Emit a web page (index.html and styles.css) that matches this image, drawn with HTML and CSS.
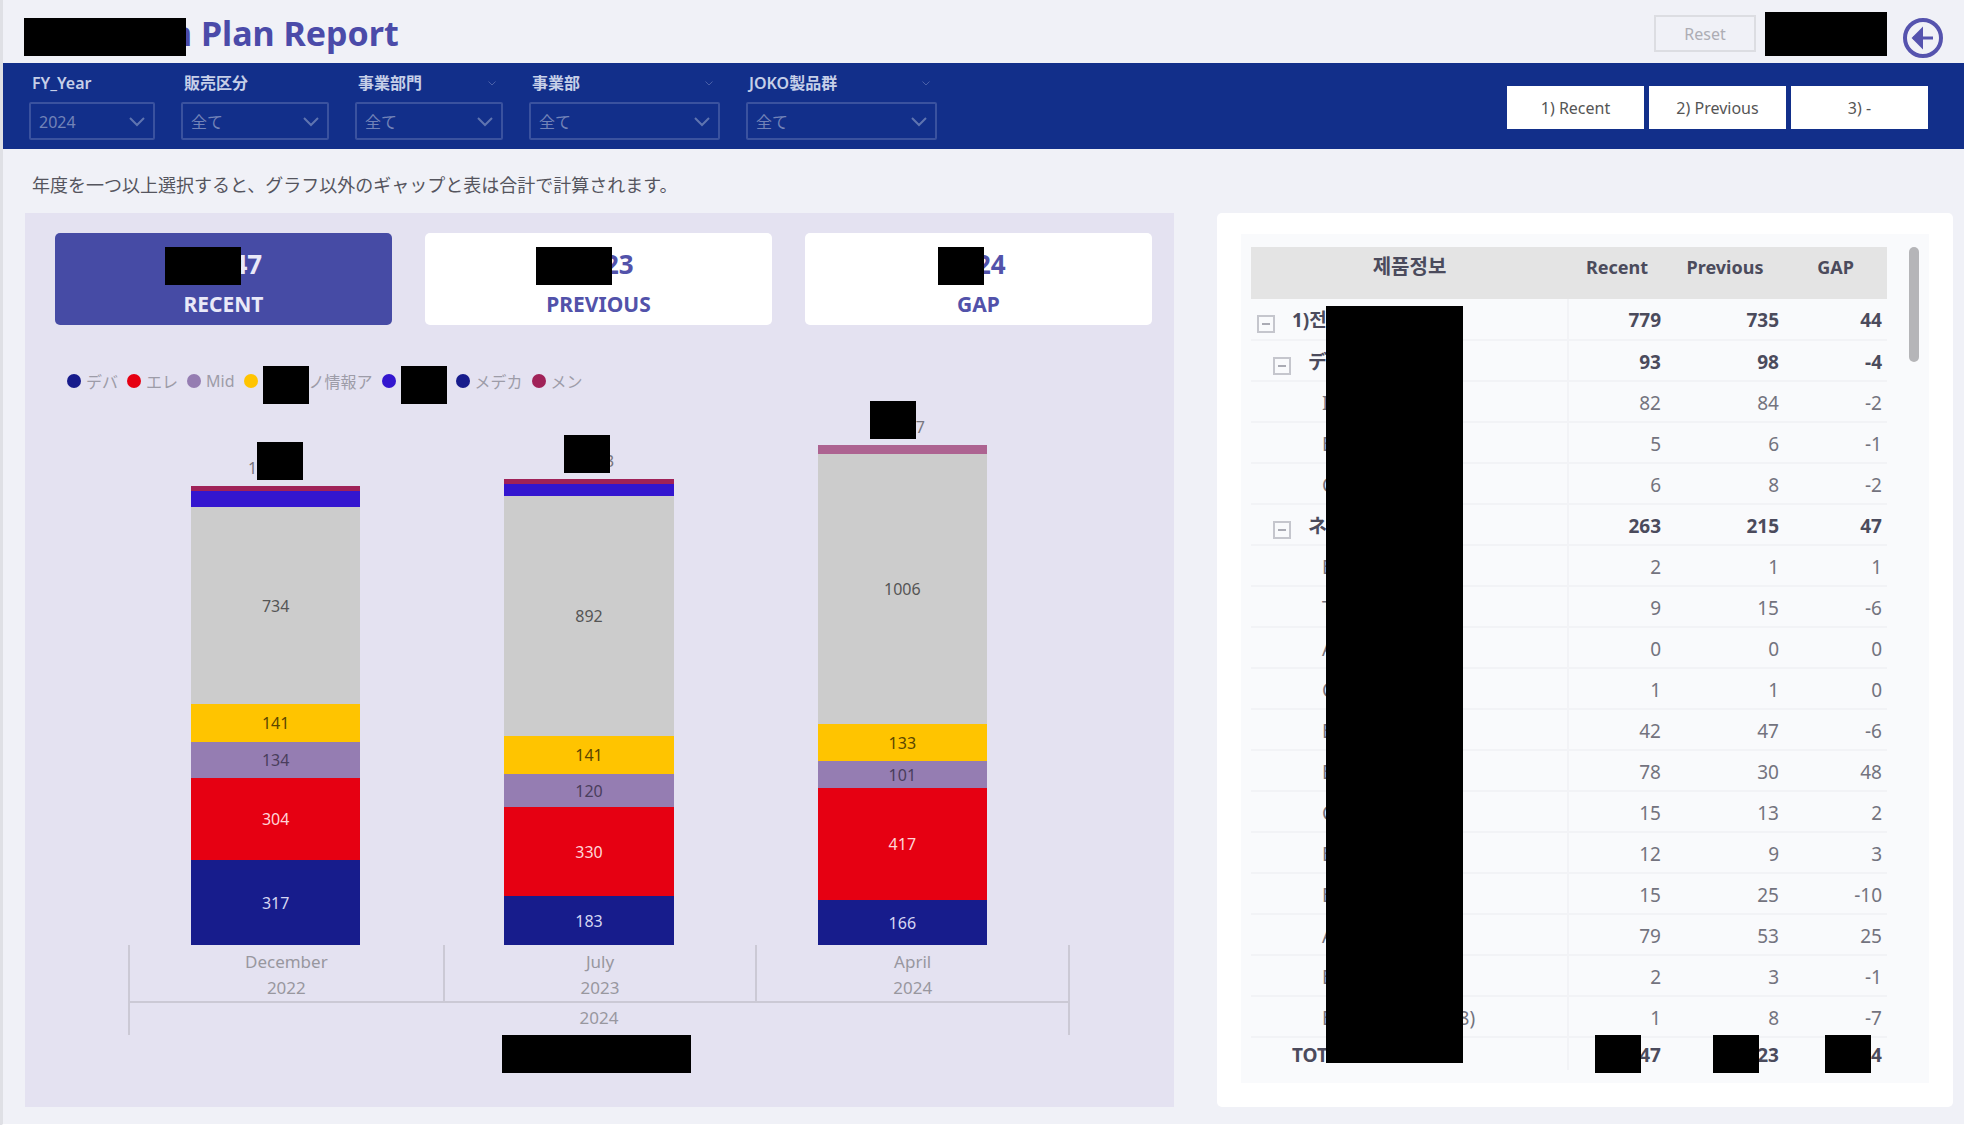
FILE: index.html
```html
<!DOCTYPE html>
<html lang="ja">
<head>
<meta charset="utf-8">
<meta name="viewport" content="width=device-width, initial-scale=1">
<title>Plan Report</title>
<link rel="stylesheet" href="styles.css">
</head>
<body>
<header class="top">
  <h1 class="title"><span class="mask mask-title"></span><span class="title-text">n Plan Report</span></h1>
  <div class="actions">
    <button class="reset" type="button">Reset</button>
    <span class="mask mask-action"></span>
    <button class="back" type="button" aria-label="Back">
      <svg viewBox="0 0 42 42" width="42" height="42" fill="none" stroke="currentColor"><circle cx="21" cy="21" r="18" stroke-width="4"/><path d="M11 21H31" stroke-width="3"/><path d="M20 12L11 21L20 30Z" fill="currentColor" stroke-width="2"/></svg>
    </button>
  </div>
</header>

<section class="band">
  <div class="filters">
    <div class="filter narrow">
      <label for="f1">FY_Year</label>
      <div class="pick"><select id="f1"><option>2024</option></select><svg class="chev" viewBox="0 0 16 10"><path d="M1 1L8 8L15 1"/></svg></div>
    </div>
    <div class="filter medium">
      <label for="f2">販売区分</label>
      <div class="pick"><select id="f2"><option>全て</option></select><svg class="chev" viewBox="0 0 16 10"><path d="M1 1L8 8L15 1"/></svg></div>
    </div>
    <div class="filter medium">
      <div class="filter-head"><label for="f3">事業部門</label><svg class="tiny" viewBox="0 0 16 10"><path d="M1 1L8 8L15 1"/></svg></div>
      <div class="pick"><select id="f3"><option>全て</option></select><svg class="chev" viewBox="0 0 16 10"><path d="M1 1L8 8L15 1"/></svg></div>
    </div>
    <div class="filter wide">
      <div class="filter-head"><label for="f4">事業部</label><svg class="tiny" viewBox="0 0 16 10"><path d="M1 1L8 8L15 1"/></svg></div>
      <div class="pick"><select id="f4"><option>全て</option></select><svg class="chev" viewBox="0 0 16 10"><path d="M1 1L8 8L15 1"/></svg></div>
    </div>
    <div class="filter wide">
      <div class="filter-head"><label for="f5">JOKO製品群</label><svg class="tiny" viewBox="0 0 16 10"><path d="M1 1L8 8L15 1"/></svg></div>
      <div class="pick"><select id="f5"><option>全て</option></select><svg class="chev" viewBox="0 0 16 10"><path d="M1 1L8 8L15 1"/></svg></div>
    </div>
  </div>
  <div class="periods">
    <button type="button">1) Recent</button>
    <button type="button">2) Previous</button>
    <button type="button">3) -</button>
  </div>
</section>

<p class="note">年度を一つ以上選択すると、グラフ以外のギャップと表は合計で計算されます。</p>

<main class="content">
  <section class="chart-panel">
    <div class="cards">
      <button class="card active" type="button"><span class="value value-a"><span class="mask mask-value"></span><span class="digits">47</span></span><span class="name">RECENT</span></button>
      <button class="card" type="button"><span class="value value-b"><span class="mask mask-value"></span><span class="digits">23</span></span><span class="name">PREVIOUS</span></button>
      <button class="card" type="button"><span class="value value-c"><span class="mask mask-small"></span><span class="digits">24</span></span><span class="name">GAP</span></button>
    </div>

    <ul class="legend">
      <li><i class="dot navy"></i>デバ</li>
      <li><i class="dot red"></i>エレ</li>
      <li><i class="dot purple"></i>Mid</li>
      <li><i class="dot yellow"></i><span class="mask mask-small"></span>ノ情報ア</li>
      <li><i class="dot violet"></i><span class="mask mask-small"></span></li>
      <li><i class="dot navy"></i>メデカ</li>
      <li><i class="dot maroon"></i>メン</li>
    </ul>

    <div class="plot">
      <div class="bar">
        <div class="total">1<span class="mask mask-small"></span></div>
        <div class="seg maroon" style="height:5px"></div>
        <div class="seg violet" style="height:16px"></div>
        <div class="seg grey" style="height:197px">734</div>
        <div class="seg yellow" style="height:38px">141</div>
        <div class="seg purple" style="height:36px">134</div>
        <div class="seg red" style="height:82px">304</div>
        <div class="seg navy" style="height:85px">317</div>
      </div>
      <div class="bar">
        <div class="total"><span class="mask mask-small"></span><span class="tail">3</span></div>
        <div class="seg maroon" style="height:5px"></div>
        <div class="seg violet" style="height:12px"></div>
        <div class="seg grey" style="height:240px">892</div>
        <div class="seg yellow" style="height:38px">141</div>
        <div class="seg purple" style="height:33px">120</div>
        <div class="seg red" style="height:89px">330</div>
        <div class="seg navy" style="height:49px">183</div>
      </div>
      <div class="bar">
        <div class="total trailing"><span class="mask mask-small"></span>7</div>
        <div class="seg rose" style="height:9px"></div>
        <div class="seg grey" style="height:270px">1006</div>
        <div class="seg yellow" style="height:37px">133</div>
        <div class="seg purple" style="height:27px">101</div>
        <div class="seg red" style="height:112px">417</div>
        <div class="seg navy" style="height:45px">166</div>
      </div>
    </div>
    <div class="axis">
      <div class="months">
        <div>December<br>2022</div>
        <div>July<br>2023</div>
        <div>April<br>2024</div>
      </div>
      <div class="year">2024</div>
    </div>
    <div class="axis-title"><div class="mask mask-axis"></div></div>
  </section>

  <section class="table-panel">
    <div class="table-area">
      <div class="table-wrap">
        <table>
          <colgroup><col class="c1"><col class="c2"><col class="c3"><col class="c4"></colgroup>
          <thead><tr><th scope="col">제품정보</th><th scope="col">Recent</th><th scope="col">Previous</th><th scope="col">GAP</th></tr></thead>
          <tbody>
            <tr class="strong"><td class="l1"><button class="toggle" type="button" aria-label="Collapse"></button>1)전</td><td>779</td><td>735</td><td>44</td></tr>
            <tr class="strong"><td class="l2"><button class="toggle" type="button" aria-label="Collapse"></button>デ</td><td>93</td><td>98</td><td>-4</td></tr>
            <tr><td class="l3">I</td><td>82</td><td>84</td><td>-2</td></tr>
            <tr><td class="l3">E</td><td>5</td><td>6</td><td>-1</td></tr>
            <tr><td class="l3">C</td><td>6</td><td>8</td><td>-2</td></tr>
            <tr class="strong"><td class="l2"><button class="toggle" type="button" aria-label="Collapse"></button>ネ</td><td>263</td><td>215</td><td>47</td></tr>
            <tr><td class="l3">E</td><td>2</td><td>1</td><td>1</td></tr>
            <tr><td class="l3">T</td><td>9</td><td>15</td><td>-6</td></tr>
            <tr><td class="l3">A</td><td>0</td><td>0</td><td>0</td></tr>
            <tr><td class="l3">C</td><td>1</td><td>1</td><td>0</td></tr>
            <tr><td class="l3">E</td><td>42</td><td>47</td><td>-6</td></tr>
            <tr><td class="l3">E</td><td>78</td><td>30</td><td>48</td></tr>
            <tr><td class="l3">C</td><td>15</td><td>13</td><td>2</td></tr>
            <tr><td class="l3">E</td><td>12</td><td>9</td><td>3</td></tr>
            <tr><td class="l3">E</td><td>15</td><td>25</td><td>-10</td></tr>
            <tr><td class="l3">A</td><td>79</td><td>53</td><td>25</td></tr>
            <tr><td class="l3">E</td><td>2</td><td>3</td><td>-1</td></tr>
            <tr><td class="l3">E<span class="paren">8)</span></td><td>1</td><td>8</td><td>-7</td></tr>
          </tbody>
          <tfoot><tr><td>TOTAL</td><td>47<span class="mask mask-cell"></span></td><td>23<span class="mask mask-cell"></span></td><td>24<span class="mask mask-cell last"></span></td></tr></tfoot>
        </table>
        <div class="mask mask-column"></div>
      </div>
      <div class="scrollbar"><div class="thumb"></div></div>
    </div>
  </section>
</main>
</body>
</html>
```

FILE: styles.css
```css
* { box-sizing: border-box; }

body {
  margin: 0;
  min-height: 100vh;
  background: #f0f1f7;
  border-left: 3px solid #dfe0e5;
  border-bottom: 2px solid #fff;
  color: #4b4b5c;
  font-family: "Noto Sans", "Noto Sans CJK JP", "Noto Sans CJK KR", sans-serif;
}

button, select { font: inherit; margin: 0; }

.mask { display: block; flex: none; background: #000; }
.mask-title { width: 162px; height: 38px; z-index: 1; }
.mask-action { width: 122px; height: 44px; }
.mask-value { width: 76px; height: 38px; z-index: 1; }
.mask-small { width: 46px; height: 38px; z-index: 1; }
.mask-axis { width: 189px; height: 38px; }
.axis-title { display: flex; justify-content: center; padding-right: 6px; }

/* Page header */
.top {
  display: flex;
  align-items: center;
  justify-content: space-between;
  height: 63px;
  padding: 0 20px 0 21px;
}
.title {
  display: flex;
  align-items: flex-start;
  height: 63px;
  margin: 0;
  padding-top: 18px;
  color: #4b4ba9;
  font-size: 34px;
  font-weight: 700;
  line-height: 30px;
}
.title-text { margin-left: -16px; }
.actions { display: flex; align-items: center; gap: 9px; padding-top: 4px; }
.reset {
  width: 102px;
  height: 37px;
  background: transparent;
  border: 2px solid #dcdde2;
  color: #adadb4;
  font-size: 16px;
}
.back {
  display: flex;
  margin: 8px 0 0 6px;
  padding: 0;
  border: 0;
  background: none;
  color: #5553ae;
}

/* Filter band */
.band {
  display: flex;
  justify-content: space-between;
  align-items: flex-start;
  height: 86px;
  padding: 8px 36px 0 26px;
  background: #122f8a;
}
.filters { display: flex; gap: 26px; }
.filter label {
  display: block;
  padding-left: 3px;
  color: #c6cfe8;
  font-size: 16px;
  font-weight: 600;
  line-height: 24px;
}
.filter-head { display: flex; justify-content: space-between; align-items: center; padding-right: 7px; }
.narrow { width: 126px; }
.medium { width: 148px; }
.wide { width: 191px; }
.pick { position: relative; margin-top: 7px; }
.pick select {
  width: 100%;
  height: 38px;
  padding: 2px 8px 0;
  appearance: none;
  background: transparent;
  border: 2px solid #3a529f;
  border-radius: 2px;
  color: #7283b8;
  font-size: 16px;
}
.chev {
  position: absolute;
  right: 10px;
  top: 15px;
  width: 16px;
  height: 10px;
  fill: none;
  stroke: #5f74b0;
  stroke-width: 2;
  pointer-events: none;
}
.tiny { width: 8px; height: 5px; fill: none; stroke: #4a60a8; stroke-width: 2; }
.periods { display: flex; gap: 5px; padding-top: 15px; }
.periods button {
  width: 137px;
  height: 43px;
  padding: 0;
  background: #fff;
  border: 0;
  color: #555;
  font-size: 16px;
}

.note {
  margin: 0;
  padding: 22px 29px 14px;
  color: #55555e;
  font-size: 18px;
  line-height: 28px;
}

.content {
  display: grid;
  grid-template-columns: minmax(0, 1149fr) minmax(0, 736fr);
  gap: 43px;
  padding: 0 11px 17px 22px;
}

/* Chart panel */
.chart-panel { background: #e4e2f1; padding: 20px 0 33px; }
.cards {
  display: grid;
  grid-template-columns: 337fr 347fr 347fr;
  gap: 33px;
  padding: 0 22px 0 30px;
}
.card {
  display: flex;
  flex-direction: column;
  align-items: center;
  height: 92px;
  padding: 14px 0 0;
  border: 0;
  border-radius: 5px;
  background: #fff;
  color: #5252aa;
  font-weight: 700;
}
.card.active { background: #464ba5; color: #e9e9f8; }
.value { display: flex; height: 38px; line-height: 34px; font-size: 26px; }
.value-a { width: 118px; }
.value-b { width: 125px; }
.value-c { width: 81px; }
.digits { margin-left: -8px; }
.name { font-size: 21px; line-height: 38px; }

.legend {
  display: flex;
  align-items: center;
  gap: 9px;
  height: 40px;
  margin: 36px 0 0;
  padding: 0 42px;
  list-style: none;
  color: #9d9ca8;
  font-size: 16px;
}
.legend li { display: flex; align-items: center; }
.legend .mask { margin-top: 8px; }
.dot { flex: none; width: 14px; height: 14px; margin-right: 5px; border-radius: 50%; }

.navy { background: #171c8c; color: #d5d6f2; }
.red { background: #e60012; color: #ffd5d8; }
.purple { background: #957db2; color: #4a3d5c; }
.yellow { background: #ffc400; color: #5b4600; }
.grey { background: #ccc; color: #555; }
.violet { background: #3316cf; }
.maroon { background: #a02258; }
.rose { background: #ad6391; }

.plot {
  display: grid;
  grid-template-columns: repeat(3, 1fr);
  align-items: end;
  justify-items: center;
  height: 544px;
  margin: 0 115px 0 94px;
}
.bar { width: 54%; }
.seg {
  display: flex;
  align-items: center;
  justify-content: center;
  font-size: 16px;
  line-height: 20px;
}
.total {
  display: flex;
  justify-content: center;
  align-items: flex-end;
  margin-bottom: 6px;
  color: #77767e;
  font-size: 16px;
  line-height: 24px;
}
.trailing { padding-right: 10px; }
.tail { margin-left: -5px; }

.axis {
  margin: 0 104px 0 103px;
  border: solid #cbc9d5;
  border-width: 0 2px;
  color: #98979f;
  font-size: 17px;
  text-align: center;
}
.months {
  display: grid;
  grid-template-columns: repeat(3, 1fr);
  height: 58px;
  padding: 0;
  border-bottom: 2px solid #cbc9d5;
  line-height: 26px;
}
.months div { padding-top: 4px; }
.months div + div { border-left: 2px solid #cbc9d5; }
.year { height: 32px; line-height: 30px; }

/* Table panel */
.table-panel { padding: 21px 24px 24px; background: #fff; border-radius: 5px; }
.table-area {
  display: flex;
  justify-content: space-between;
  height: 100%;
  padding: 13px 10px 13px 10px;
  background: #f9fafc;
}
.table-wrap { position: relative; flex: 1; }
table { width: 100%; table-layout: fixed; border-collapse: collapse; font-size: 19px; }
.c1 { width: 317px; }
.c2 { width: 98px; }
.c3 { width: 118px; }
.c4 { width: 103px; }
th {
  height: 52px;
  padding: 6px 0 0;
  background: #e4e4e4;
  font-size: 18px;
  font-weight: 700;
  line-height: 28px;
  vertical-align: top;
}
th:first-child { font-size: 20px; }
td {
  height: 41px;
  padding: 2px 5px 0 0;
  border-bottom: 2px solid #f2f3f6;
  color: #73737e;
  line-height: 28px;
  text-align: right;
  white-space: nowrap;
}
td:first-child { border-right: 2px solid #f2f3f6; text-align: left; }
.strong td, tfoot td { color: #4b4b5c; font-weight: 700; }
td.l1 { padding-left: 6px; }
td.l2 { padding-left: 22px; }
td.l3 { padding-left: 71px; }
.toggle {
  position: relative;
  width: 18px;
  height: 18px;
  margin-right: 17px;
  padding: 0;
  background: none;
  border: 2px solid #c5c6cd;
  vertical-align: -4px;
}
.toggle::after {
  content: "";
  position: absolute;
  inset: 6px 3px auto;
  height: 2px;
  background: #aaabb4;
}
.paren { margin-left: 126px; }
tfoot td { position: relative; height: 33px; border-bottom: 0; }
tfoot td:first-child { padding-left: 41px; }
.mask-cell { position: absolute; right: 25px; top: -3px; width: 46px; height: 38px; }
.mask-cell.last { right: 16px; }
.mask-column { position: absolute; left: 75px; top: 59px; width: 137px; height: 757px; }
.scrollbar { flex: none; width: 32px; padding-left: 22px; }
.thumb { height: 115px; border-radius: 5px; background: #b5b5b8; }
```
